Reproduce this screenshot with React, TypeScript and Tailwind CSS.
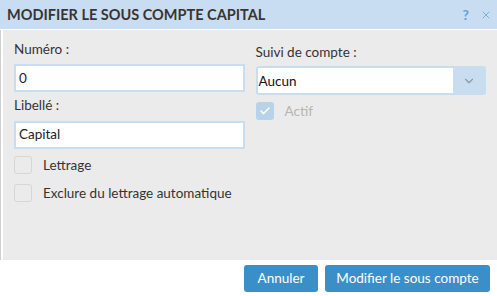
import React from "react";
import { ChevronDown, Check, X } from "lucide-react";

const font = { fontFamily: "Lato, 'Noto Sans', sans-serif" };

const Box: React.FC<{ checked?: boolean; disabled?: boolean; label: string }> = ({ checked, disabled, label }) => (
  <label className="flex items-center gap-[11px]">
    <span
      className={
        checked
          ? "flex h-[18px] w-[18px] items-center justify-center rounded-[3px] bg-[#b7d3ea]"
          : "h-[18px] w-[18px] rounded-[3px] border border-[#d6d6d6] bg-[#ebebeb]"
      }
    >
      {checked && <Check className="h-3 w-3 text-white" strokeWidth={3} />}
    </span>
    <span className={disabled ? "text-[13.5px] text-[#b5b5b5]" : "text-[13.5px] text-[#333]"}>{label}</span>
  </label>
);

export default function App() {
  return (
    <div className="flex h-[296px] w-[497px] flex-col bg-white" style={font}>
      <div className="flex h-[29px] items-center justify-between bg-[#c8ddf1] pl-[7px] pr-[5px]">
        <h1 className="text-[14.5px] font-bold text-[#3a3434]">MODIFIER LE SOUS COMPTE CAPITAL</h1>
        <div className="flex items-center gap-[11px] text-[#5ea3da]">
          <span className="text-[14px] font-bold">?</span>
          <X className="h-[12px] w-[12px]" strokeWidth={1.5} />
        </div>
      </div>
      <div className="mt-px flex flex-1 border-l border-[#cfcfcf] pl-[2px]">
        <div className="grid flex-1 grid-cols-2 gap-[11px] bg-[#ebebeb] pl-[11px] pr-[11px] pt-[9px]">
          <div className="flex flex-col">
            <span className="text-[13.5px] text-[#333]">Numéro :</span>
            <div className="mt-[5px] flex h-[28px] items-center border-2 border-[#c8ddf0] bg-white px-[3px] text-[13.5px] text-[#222]">
              0
            </div>
            <span className="mt-[3px] text-[13.5px] text-[#333]">Libellé :</span>
            <div className="mt-[5px] flex h-[28px] items-center border-2 border-[#c8ddf0] bg-white px-[3px] text-[13.5px] text-[#222]">
              Capital
            </div>
            <div className="mt-[6px] flex flex-col gap-[8px]">
              <Box label="Lettrage" />
              <Box label="Exclure du lettrage automatique" />
            </div>
          </div>
          <div className="flex flex-col">
            <span className="pt-[3px] text-[13.5px] text-[#333]">Suivi de compte :</span>
            <div className="mt-[4px] flex h-[29px] overflow-hidden rounded-[3px] border-2 border-[#c8ddf0] bg-[#c8ddf0]">
              <div className="flex flex-1 items-center bg-white px-[1px] text-[13.5px] text-[#111]">Aucun</div>
              <div className="flex w-[31px] items-center justify-center">
                <ChevronDown className="h-[14px] w-[14px] text-[#8b98a3]" strokeWidth={2} />
              </div>
            </div>
            <div className="mt-[6px]">
              <Box checked disabled label="Actif" />
            </div>
          </div>
        </div>
      </div>
      <div className="flex h-[36px] items-center justify-end gap-[7px] pr-[7px]">
        <button className="h-[27px] w-[74px] rounded-[3px] bg-[#3b8fc8] text-[13.5px] text-white">Annuler</button>
        <button className="h-[27px] w-[165px] rounded-[3px] bg-[#3b8fc8] text-[13.5px] text-white">Modifier le sous compte</button>
      </div>
    </div>
  );
}
